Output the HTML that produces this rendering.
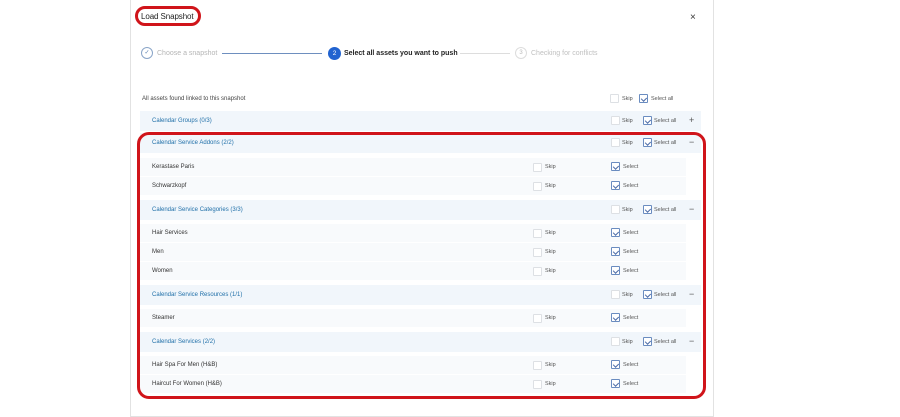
<!DOCTYPE html>
<html><head><style>
body{margin:0;width:900px;height:400px;background:#fff;position:relative;overflow:hidden;font-family:"Liberation Sans",sans-serif;}
.a{position:absolute}
.modal{left:130px;top:-5px;width:582px;height:420px;border:1px solid #e2e2e2;background:#fff}
.t{font-size:6px;color:#333;white-space:nowrap;line-height:8px}
.h{font-size:6px;color:#1f6fa8;white-space:nowrap;line-height:8px}
.band{background:#f1f6fb;left:140px;width:561px;height:20px}
.row{background:#f8fafc;left:140px;width:546px;height:18px}
.cb{width:7px;height:7px;border:1px solid #dde0e4;border-radius:1px;background:#fff}
.cbc{width:7px;height:7px;border:1px solid #6a8cc0;border-radius:1px;background:#fff}
.cbc:after{content:"";position:absolute;left:2px;top:0.5px;width:2.5px;height:4px;border:solid #4a6aa6;border-width:0 1px 1px 0;transform:rotate(45deg)}
.g{font-size:5.5px;color:#555}
</style></head><body>
<div class="a modal"></div>
<div class="a" style="left:135px;top:6px;width:66px;height:20px;border:3px solid #d0141a;border-radius:10px;box-sizing:border-box"></div>
<div class="a" style="left:141px;top:12px;font-size:8px;color:#222;letter-spacing:-0.1px">Load Snapshot</div>
<div class="a" style="left:690px;top:12px;font-size:10px;color:#333">×</div>
<!-- stepper -->
<div class="a" style="left:141px;top:47px;width:12px;height:12px;border:1px solid #8aa5c8;border-radius:50%;box-sizing:border-box;font-size:6px;color:#5a7fb0;text-align:center;line-height:10px">✓</div>
<div class="a t" style="left:157px;top:50px;color:#b5b5b5;font-size:7px">Choose a snapshot</div>
<div class="a" style="left:222px;top:53px;width:100px;height:1px;background:#6e8fbf"></div>
<div class="a" style="left:328px;top:47px;width:13px;height:13px;border-radius:50%;background:#2163d0;font-size:6.5px;color:#fff;text-align:center;line-height:13px">2</div>
<div class="a t" style="left:344px;top:50px;color:#222;font-weight:bold;font-size:7px">Select all assets you want to push</div>
<div class="a" style="left:460px;top:53px;width:50px;height:1px;background:#ddd"></div>
<div class="a" style="left:515px;top:47px;width:12px;height:12px;border:1px solid #ddd;border-radius:50%;box-sizing:border-box;font-size:6px;color:#bbb;text-align:center;line-height:10px">3</div>
<div class="a t" style="left:531px;top:50px;color:#c0c0c0;font-size:7px">Checking for conflicts</div>

<div class="a t" style="left:142px;top:95px;color:#444">All assets found linked to this snapshot</div>
<div class="a cb" style="left:610px;top:94px"></div><div class="a t g" style="left:622px;top:95px">Skip</div>
<div class="a cbc" style="left:639px;top:94px"></div><div class="a t g" style="left:651px;top:95px">Select all</div>

<div id="c"></div>
<div class="a" style="left:137px;top:132px;width:569px;height:267px;border:3px solid #d0141a;border-radius:12px;box-sizing:border-box"></div>
<script>
var bands=[[111,"Calendar Groups (0/3)","+"],[133,"Calendar Service Addons (2/2)","−"],[200,"Calendar Service Categories (3/3)","−"],[285,"Calendar Service Resources (1/1)","−"],[332,"Calendar Services (2/2)","−"]];
var rows=[[158,"Kerastase Paris"],[177,"Schwarzkopf"],[224,"Hair Services"],[243,"Men"],[262,"Women"],[309,"Steamer"],[356,"Hair Spa For Men (H&B)"],[375,"Haircut For Women (H&B)"]];
var h="";
bands.forEach(function(b){var y=b[0];
h+='<div class="a band" style="top:'+y+'px"></div><div class="a h" style="left:152px;top:'+(y+6)+'px">'+b[1]+'</div>'+
'<div class="a cb" style="left:611px;top:'+(y+5)+'px"></div><div class="a t g" style="left:622px;top:'+(y+6)+'px">Skip</div>'+
'<div class="a cbc" style="left:643px;top:'+(y+5)+'px"></div><div class="a t g" style="left:654px;top:'+(y+6)+'px">Select all</div>'+
'<div class="a" style="left:689px;top:'+(y+4)+'px;font-size:9px;color:#555">'+b[2]+'</div>';});
rows.forEach(function(r){var y=r[0];
h+='<div class="a row" style="top:'+y+'px"></div><div class="a t" style="left:152px;top:'+(y+5)+'px">'+r[1].replace("&","&amp;")+'</div>'+
'<div class="a cb" style="left:533px;top:'+(y+5)+'px"></div><div class="a t g" style="left:545px;top:'+(y+5)+'px">Skip</div>'+
'<div class="a cbc" style="left:611px;top:'+(y+4)+'px"></div><div class="a t g" style="left:623px;top:'+(y+5)+'px">Select</div>';});
document.getElementById("c").innerHTML=h;
</script>
</body></html>
